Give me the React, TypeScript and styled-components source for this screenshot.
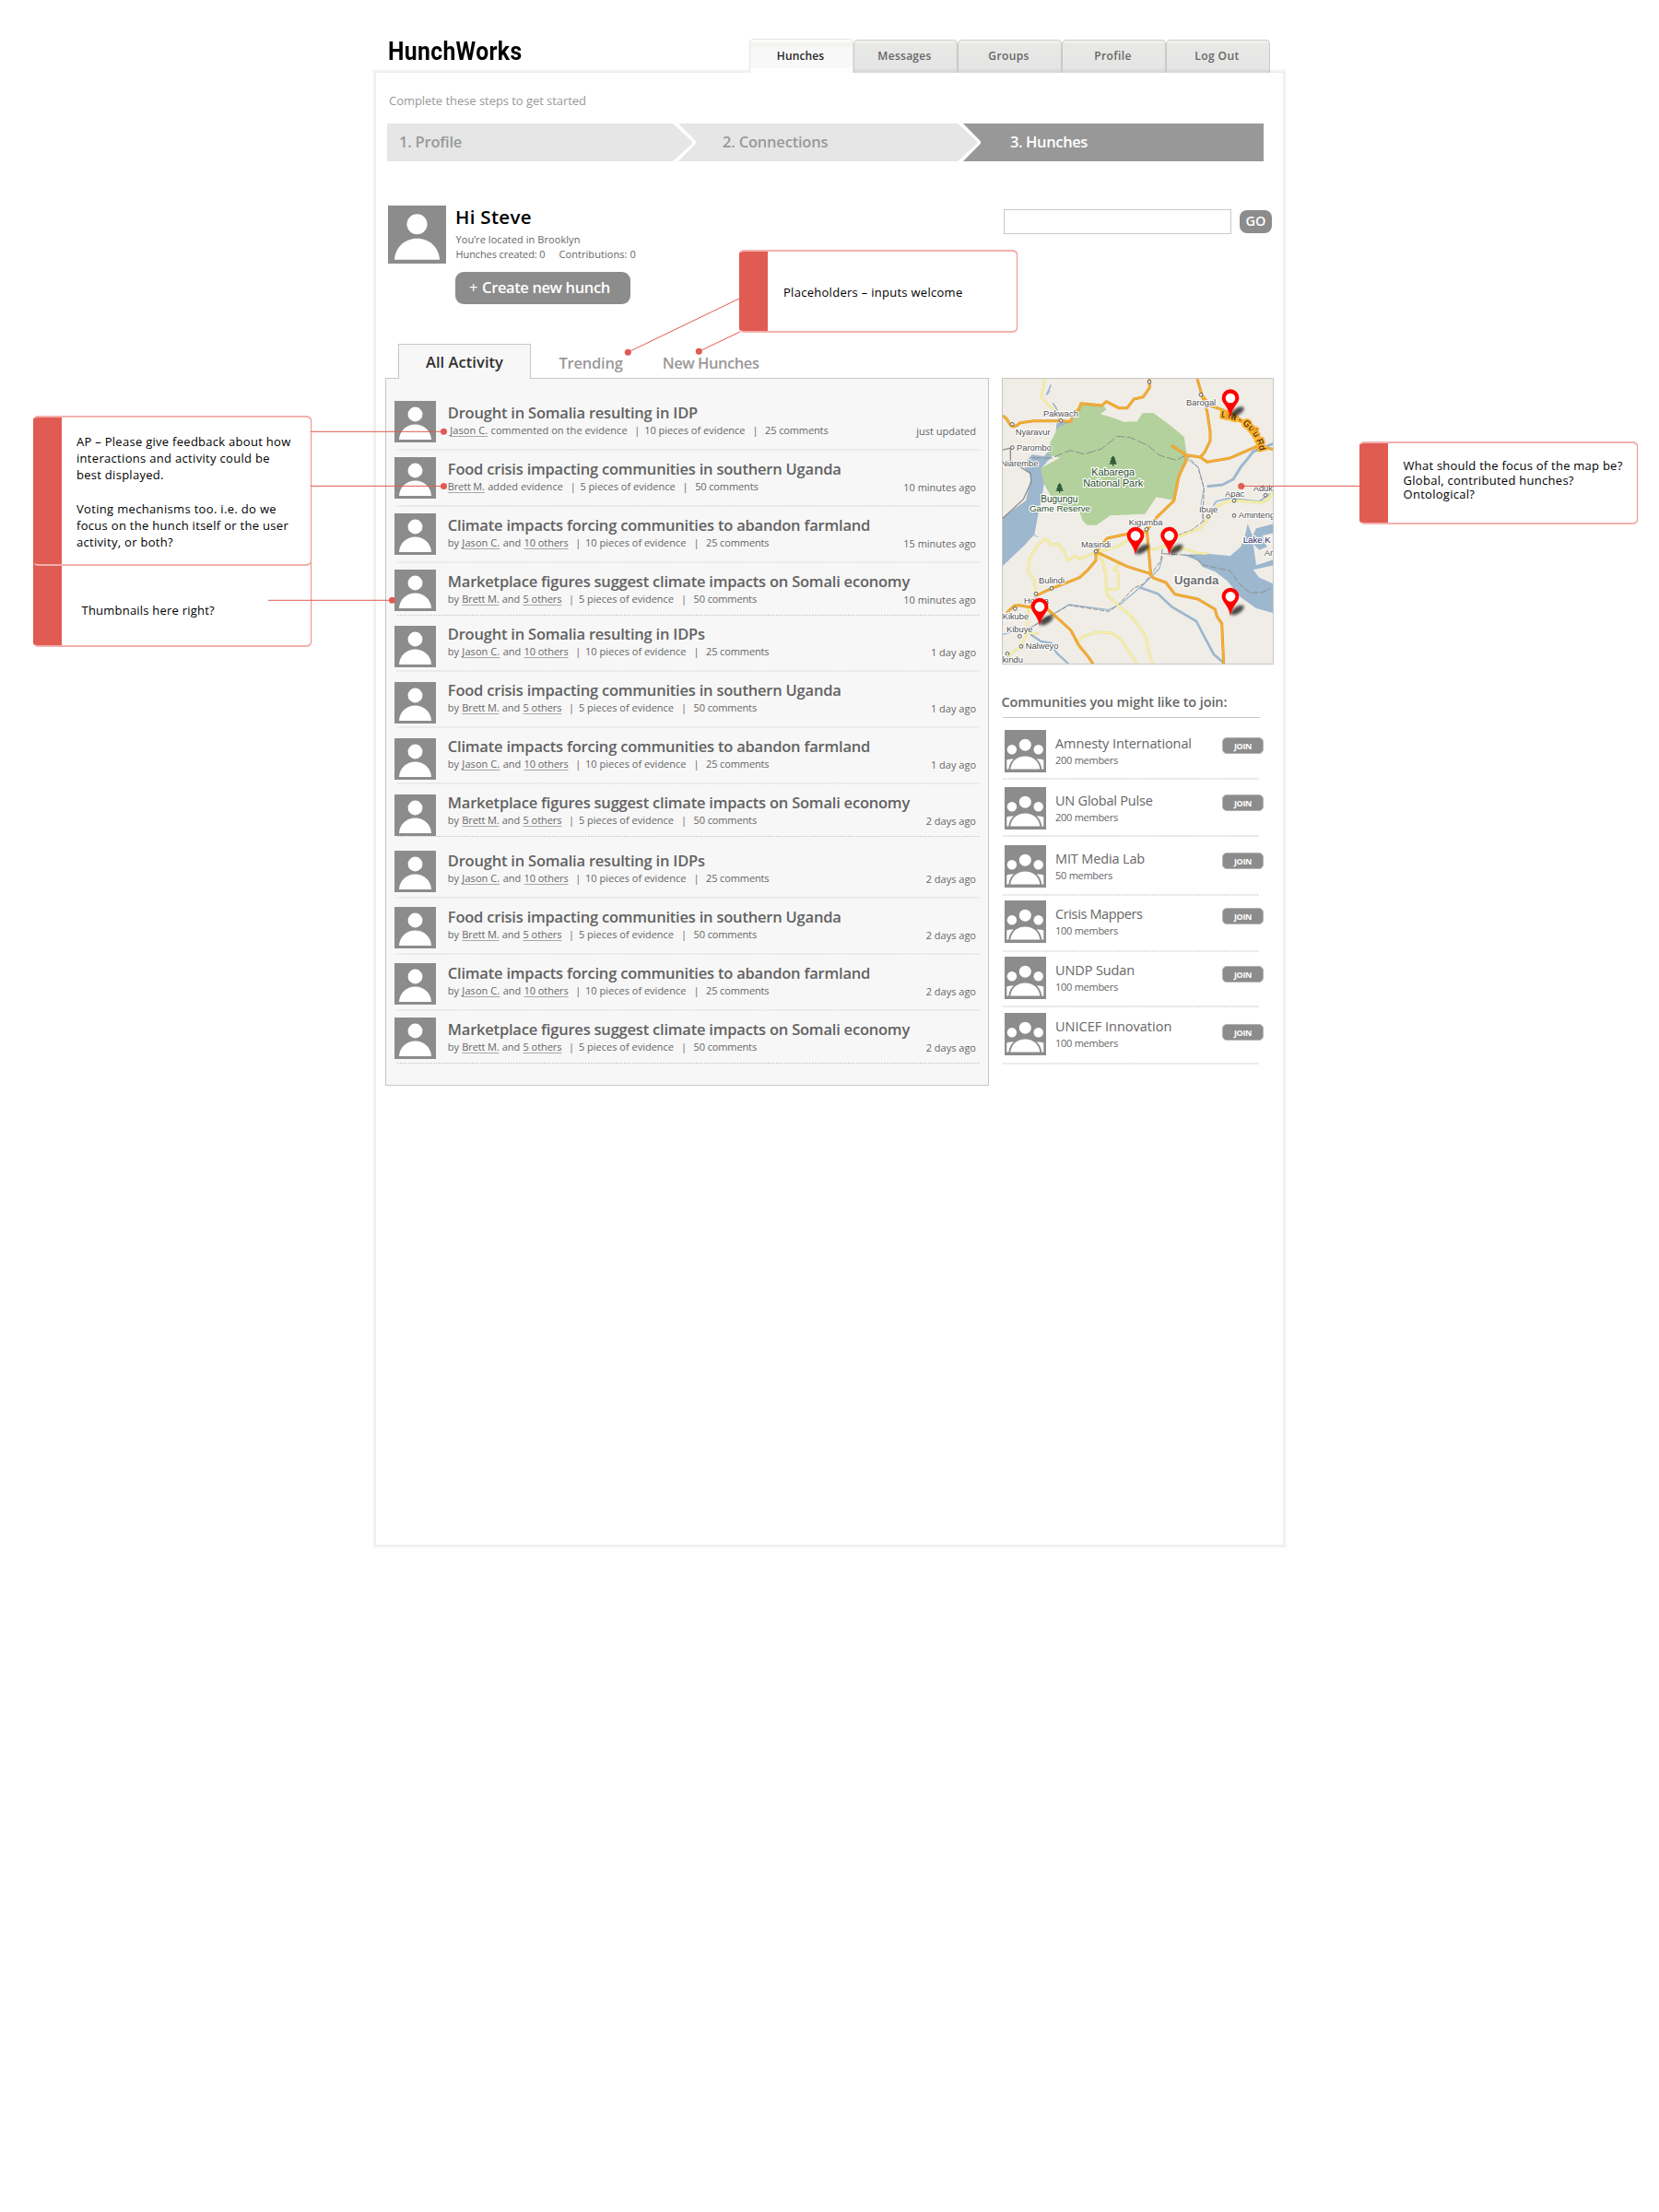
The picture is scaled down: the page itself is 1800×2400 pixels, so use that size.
import React from "react";
import styled, { createGlobalStyle } from "styled-components";

const sans = `"Open Sans", "Noto Sans", sans-serif`;
const grey = "#8c8c8c";
const red = "#e05b52";

const GlobalStyle = createGlobalStyle`
  body { margin: 0; background: #fff; font-family: ${sans}; }
  * { box-sizing: border-box; }
`;

/* ---------- page frame ---------- */

const Canvas = styled.div`
  position: relative;
  width: 1800px;
  height: 2400px;
  overflow: hidden;
`;

const Shell = styled.div`
  width: 984px;
  margin: 0 auto;
`;

const Header = styled.header`
  display: flex;
  justify-content: space-between;
  align-items: flex-end;
  height: 79px;
  padding: 0 14.5px 0 12.5px;
`;

const Logo = styled.h1`
  margin: 0 0 5px;
  font: 700 28px/36px Roboto, sans-serif;
  letter-spacing: 0.4px;
  color: #000;
  transform: scaleX(0.882);
  transform-origin: left;
`;

const Nav = styled.nav`
  position: relative;
  z-index: 1;
  display: flex;
`;

const NavTab = styled.a<{ $active?: boolean; $ls: number }>`
  width: 113px;
  height: ${(p) => (p.$active ? 37 : 36)}px;
  align-self: flex-end;
  border: solid ${(p) => (p.$active ? "#e6e6e6" : "#c9c9c9")};
  border-width: 1px 1px 0;
  border-radius: 5px 5px 0 0;
  background: ${(p) =>
    p.$active
      ? "linear-gradient(#fff 0, #f4f3f0 5px, #f8f8f8 11px, #f8f8f8 30px, #fefefe 31px)"
      : "linear-gradient(#f6f5f3 0, #e8e8e6 4px, #e5e5e5 31px, #d9d9d9 32px, #d9d9d9 100%)"};
  text-align: center;
  text-indent: -1px;
  font-weight: 600;
  font-size: 12px;
  line-height: ${(p) => (p.$active ? 35 : 34)}px;
  letter-spacing: ${(p) => p.$ls}px;
  color: ${(p) => (p.$active ? "#262626" : "#666")};
`;

const Panel = styled.main`
  height: 1597px;
  padding-top: 20px;
  background: #fff;
  box-shadow: 0 0 0 2px #eeeeee, 0 0 0 4px #f8f8f7;
`;

/* ---------- onboarding steps ---------- */

const Intro = styled.p`
  margin: 0 0 15px 14px;
  font-size: 13px;
  line-height: 20px;
  letter-spacing: -0.05px;
  color: #999;
`;

const Steps = styled.div`
  display: flex;
  width: 951px;
  height: 41px;
  margin-left: 12px;
`;

const Step = styled.div<{ $w: number; $pad: number; $ls: number; $current?: boolean }>`
  width: ${(p) => p.$w}px;
  padding-left: ${(p) => p.$pad}px;
  background: ${(p) => (p.$current ? "#989898" : "#e6e6e6")};
  color: ${(p) => (p.$current ? "#fff" : "#999")};
  font-weight: 600;
  font-size: 16.5px;
  line-height: 39px;
  letter-spacing: ${(p) => p.$ls}px;
`;

const Chevron = ({ next }: { next: string }) => (
  <svg width="25" height="41" viewBox="0 0 25 41">
    <rect width="25" height="41" fill={next} />
    <path d="M0 0H6L24.2 18.6Q26 20.5 24.2 22.4L6 41H0Z" fill="#fff" />
    <path d="M0 0L20.5 18.8Q22 20.5 20.5 22.2L0 41Z" fill="#e6e6e6" />
  </svg>
);

/* ---------- greeting and search ---------- */

const Greeting = styled.section`
  display: flex;
  align-items: flex-start;
  height: 107px;
  margin-top: 48px;
  padding: 0 12px 0 13px;
`;

const GreetingText = styled.div`
  padding-left: 10.5px;
`;

const Hello = styled.h2`
  margin: -1px 0 4px -0.5px;
  font-weight: 600;
  font-size: 20.5px;
  line-height: 26px;
  letter-spacing: 0.3px;
  color: #000;
`;

const Facts = styled.div`
  display: flex;
  gap: 15px;
  font-size: 11px;
  line-height: 16px;
  color: #666;
`;

const Fact = styled.span<{ $ls?: number }>`
  letter-spacing: ${(p) => p.$ls ?? 0}px;
`;

const CreateButton = styled.button`
  display: flex;
  gap: 5px;
  width: 190px;
  height: 35px;
  margin: 11px 0 0 -0.5px;
  padding: 0 0 2px 15px;
  align-items: center;
  border: 0;
  border-radius: 9px;
  background: ${grey};
  color: #fff;
  font: 600 16.5px ${sans};
  letter-spacing: -0.38px;
`;

const Plus = styled.span`
  font-weight: 400;
`;

const Search = styled.form`
  display: flex;
  align-items: center;
  gap: 9px;
  margin: 4px 0 0 auto;
`;

const SearchInput = styled.input`
  width: 247px;
  height: 27px;
  border: 1px solid #c8c8c8;
  background: #fff;
`;

const GoButton = styled.button`
  width: 35px;
  height: 25px;
  padding: 0 0 1px;
  border: 0;
  border-radius: 8px;
  background: ${grey};
  color: #fff;
  font: 600 14.5px/24px ${sans};
`;

/* ---------- two columns ---------- */

const Columns = styled.div`
  display: flex;
  align-items: flex-start;
  gap: 14px;
  margin: 43px 0 0 10px;
`;

const FeedColumn = styled.section`
  width: 655px;
`;

const FeedTabs = styled.div`
  display: flex;
  align-items: flex-end;
  height: 38px;
  padding-left: 14px;
`;

const FeedTab = styled.a<{ $active?: boolean; $ml?: number; $ls: number }>`
  flex: none;
  width: ${(p) => (p.$active ? "144px" : "auto")};
  height: 38px;
  margin-left: ${(p) => p.$ml ?? 0}px;
  position: relative;
  z-index: 1;
  border: ${(p) => (p.$active ? "1px solid #c6c6c6" : "0")};
  border-bottom: 0;
  background: ${(p) => (p.$active ? "#f7f7f7" : "transparent")};
  text-align: center;
  font-weight: 600;
  font-size: 16.5px;
  line-height: ${(p) => (p.$active ? 38 : 42)}px;
  letter-spacing: ${(p) => p.$ls}px;
  color: ${(p) => (p.$active ? "#303030" : "#999")};
`;

const Feed = styled.div`
  height: 768px;
  margin-top: -1px;
  padding: 24px 9px 0;
  border: 1px solid #c6c6c6;
  background: #f7f7f7;
`;

const FeedItem = styled.article<{ $h: number }>`
  height: ${(p) => p.$h}px;
`;

const FeedMain = styled.div<{ $h: number }>`
  display: flex;
  align-items: flex-start;
  height: ${(p) => p.$h}px;
`;

const FeedText = styled.div<{ $top: number }>`
  flex: 1;
  margin-top: ${(p) => p.$top}px;
  padding: 0 4px 0 12.8px;
`;

const FeedTitle = styled.h3`
  margin: 0;
  font-weight: 600;
  font-size: 16.5px;
  line-height: 20px;
  letter-spacing: -0.21px;
  color: #626262;
  white-space: nowrap;
`;

const MetaLine = styled.div<{ $indent: number }>`
  display: flex;
  margin-top: 1px;
  padding-left: ${(p) => p.$indent}px;
  font-size: 11px;
  line-height: 16px;
  color: #666;
  white-space: nowrap;
`;

const Who = styled.span`
  display: flex;
  gap: 3.3px;
`;

const Person = styled.a<{ $ls?: number }>`
  letter-spacing: ${(p) => p.$ls ?? 0}px;
  text-decoration: underline #a8a8a8 1px;
  text-underline-offset: 2px;
`;

const Bar = styled.span`
  margin: 0 4.8px 0 7.6px;
`;

const LastBar = styled(Bar)`
  margin: 0 7.5px 0 8px;
`;

const Comments = styled.span`
  letter-spacing: -0.12px;
`;

const When = styled.time`
  margin: 1px 0 0 auto;
`;

const FeedRule = styled.div<{ $dark?: boolean }>`
  height: ${(p) => (p.$dark ? 1 : 2)}px;
  margin-left: 3px;
  background: repeating-linear-gradient(
    90deg,
    ${(p) => (p.$dark ? "#c2c2c2 0 1px, #dcdcdc 1px 2px, #f7f7f7 2px 3px" : "#e2e2e2 0 1px, #f0f0f0 1px 3px")}
  );
`;

/* ---------- side column ---------- */

const Side = styled.aside`
  width: 295px;
  padding-top: 37px;
`;

const MapFrame = styled.div`
  width: 295px;
  height: 311px;
  border: 1px solid #c6c6c6;
  overflow: hidden;
  svg { display: block; }
`;

const SideTitle = styled.h2`
  width: 279px;
  height: 27px;
  margin: 31px 0 0 1px;
  border-bottom: 1px solid #c6c6c6;
  font-weight: 600;
  font-size: 14.5px;
  line-height: 20px;
  letter-spacing: -0.1px;
  text-indent: -1.5px;
  color: #666;
`;

const Communities = styled.div`
  width: 283px;
  padding: 13px 0 0 1px;
`;

const Community = styled.article<{ $h: number }>`
  height: ${(p) => p.$h}px;
`;

const CommunityMain = styled.div<{ $h: number }>`
  display: flex;
  align-items: flex-start;
  height: ${(p) => p.$h}px;
  padding-left: 2px;
`;

const CommunityText = styled.div`
  flex: 1;
  padding: 5px 0 0 10px;
  color: #666;
  white-space: nowrap;
`;

const CommunityName = styled.div<{ $ls: number }>`
  font-size: 14.5px;
  line-height: 20px;
  letter-spacing: ${(p) => p.$ls}px;
`;

const Members = styled.div`
  font-size: 11px;
  line-height: 16px;
  letter-spacing: -0.27px;
`;

const JoinButton = styled.button<{ $top: number }>`
  width: 45px;
  height: 18px;
  margin: ${(p) => p.$top}px -1px 0 0;
  padding: 0;
  border: 1px solid #b4b4b4;
  border-radius: 5px;
  background: ${grey};
  color: #fff;
  font: 700 9px/15px ${sans};
  letter-spacing: -0.3px;
`;

const CommunityRule = styled.div`
  width: 278px;
  height: 2px;
  background: repeating-linear-gradient(90deg, #dedede 0 1px, #f2f2f2 1px 3px);
`;

/* ---------- review notes laid over the page ---------- */

const Note = styled.div<{ $x: number; $y: number; $w: number; $h: number; $px: number; $pt: number; $lh: number }>`
  position: absolute;
  left: ${(p) => p.$x}px;
  top: ${(p) => p.$y}px;
  width: ${(p) => p.$w}px;
  height: ${(p) => p.$h}px;
  padding: ${(p) => p.$pt}px 0 0 ${(p) => p.$px}px;
  border: 2px solid #f2b1ad;
  border-width: 2px 1px;
  border-left-color: ${red};
  border-right-color: #ee918b;
  border-radius: 5px;
  background: linear-gradient(90deg, ${red} 0 30px, #fff 30px) padding-box, ${red} left / 31px 100% no-repeat border-box;
  font-size: 13px;
  line-height: ${(p) => p.$lh}px;
  color: #000;
  white-space: nowrap;
`;

const NoteLine = styled.div<{ $ls?: number }>`
  min-height: 1lh;
  letter-spacing: ${(p) => p.$ls ?? 0.28}px;
`;

const Wires = styled.svg`
  position: absolute;
  inset: 0;
  pointer-events: none;
`;

/* ---------- drawings ---------- */

const Avatar = ({ size = 45 }: { size?: number }) => (
  <svg width={size} height={size} viewBox="0 0 45 45" style={{ flex: "none" }}>
    <rect width="45" height="45" fill={grey} />
    <circle cx="22.5" cy="14.5" r="7.9" fill="#fff" />
    <path d="M5 42C5.4 32.5 13 25.5 22.5 25.5S39.6 32.5 40 42Z" fill="#fff" />
  </svg>
);

const GroupIcon = () => (
  <svg width="45" height="46" viewBox="0 0 45 46" style={{ flex: "none" }}>
    <rect width="45" height="46" fill={grey} />
    <g fill="#fff">
      <circle cx="22.3" cy="16.2" r="6.5" />
      <circle cx="7.9" cy="21.3" r="5.2" />
      <circle cx="36.7" cy="21.3" r="5.2" />
      <path d="M2.3 42.5V32.6Q5.5 31 9.8 31.6Q5 36 4.3 42.5Z" />
      <path d="M42.3 42.5V32.6Q39 31 34.8 31.6Q39.6 36 40.3 42.5Z" />
      <path d="M6.2 42.6C7.4 34 13.6 28.6 22.3 28.6S37.2 34 38.4 42.6Z" />
    </g>
  </svg>
);

const Pin = ({ x, y }: { x: number; y: number }) => (
  <g transform={`translate(${x} ${y})`}>
    <ellipse cx="22" cy="-17" rx="25" ry="11" transform="rotate(-32 22 -17)" fill="#000" opacity="0.7" filter="url(#soft)" />
    <path d="M0 2C-3 -18 -12 -30 -20 -42C-25 -49 -28 -55 -28 -62A28 28 0 0 1 28 -62C28 -55 25 -49 20 -42C12 -30 3 -18 0 2Z" fill="#f00" />
    <circle cx="0" cy="-61" r="16" fill="#fff" />
  </g>
);

const Tree = ({ x, y }: { x: number; y: number }) => (
  <g transform={`translate(${x} ${y})`}>
    <path d="M0 -16L9 -4H5L12 5H7L14 12H2V18H-2V12H-14L-7 5H-12L-5 -4H-9Z" fill="#2f5d3a" stroke="#d5e8c8" strokeWidth="2" paintOrder="stroke" />
  </g>
);

const towns: [number, number][] = [
  [502, 43], [670, 85], [214, 169], [56, 181], [56, 257], [880, 412], [778, 430], [694, 481], [778, 478], [493, 523],
  [328, 595], [184, 715], [133, 733], [65, 781], [80, 871], [85, 904], [40, 928],
];

const labels: [string, number, number][] = [
  ["Pakwach", 157, 156], ["Nyaravur", 66, 216], ["Parombo", 70, 267], ["Niarembe", 19, 318], ["Barogal", 622, 120],
  ["Aduk", 840, 399], ["Apac", 748, 418], ["Ibuje", 664, 469], ["Aminteng", 792, 487], ["Kigumba", 435, 510],
  ["Masindi", 280, 582], ["Bulindi", 142, 699], ["Hoima", 94, 765], ["Kikube", 24, 816], ["Kibuye", 37, 858],
  ["Nalweyo", 99, 912], ["kindu", 24, 957], ["Ar", 876, 609],
];

const majorRoads = [
  "M22 153Q36 158 44 174T62 188T82 176L125 170L214 170L246 172L255 145L272 133L280 113L348 120L362 107L402 128H430L452 99L482 92L503 62L502 33",
  "M658 33L675 92L690 138L700 205V235L682 272L668 288",
  "M577 252L622 281L668 288L690 304L762 292L850 254L905 262",
  "M672 85L700 120L740 134L800 166L850 205L872 250",
  "M622 281V300L598 350L582 430L523 487L494 525",
  "M494 525L507 672L517 682L556 696L585 734L660 750L716 783L722 806L738 830L744 960",
  "M328 596L365 552L420 540L494 530",
  "M328 596L430 644L507 668",
  "M328 596V625L302 655L275 680L232 697L184 715L135 738L118 770L170 783L210 818L247 852L272 900L305 940L318 960",
  "M118 777L80 770L62 772L40 792",
];

const minorRoads = [
  "M158 33V60L150 92L180 125L198 138L212 166",
  "M905 394L890 425L865 436L795 430L750 433L722 450L692 492L670 518L620 538L560 560",
  "M328 596L275 620L262 608L235 625L225 596L205 570L180 573L165 553L138 575L110 622L108 660L128 690L133 733",
  "M328 596L350 625L360 668L362 718L388 720L402 715L400 660L385 655L408 632",
  "M362 718L366 738L410 780L440 802L470 840L490 870L502 930L513 960",
  "M338 596L398 580L430 558",
  "M460 585L520 588L545 578L620 588L660 600L688 602",
  "M268 890L285 872L330 857L380 860L410 880L430 913L460 958",
  "M108 780L104 860L84 905L48 930L30 960",
  "M104 860L138 862",
];

const MapDrawing = () => (
  <svg width="293" height="309" viewBox="25 33 879 927" fontFamily='"Liberation Sans", Arial, sans-serif'>
    <defs>
      <filter id="soft" x="-50%" y="-50%" width="200%" height="200%"><feGaussianBlur stdDeviation="4" /></filter>
      <path id="gulu" d="M735 158Q790 164 822 194Q848 216 860 262" />
    </defs>
    <rect x="22" y="31" width="886" height="934" fill="#f0ede7" />

    <g fill="#9cb7ce">
      <path d="M200 178L245 170L235 215L200 255L185 285L150 325L160 370L152 420L140 475L128 540L95 575L22 645V485L100 430L118 350L90 315L120 280L160 285L195 245Z" />
      <path d="M610 606L690 602L765 610L800 580L815 538L822 505L838 545L850 520L905 505V540L878 548L890 590L905 600V640L840 655L860 680L905 700V795L850 780L800 745L755 690L715 660L675 645L660 625Z" />
    </g>
    <path d="M905 535L870 543L885 580L860 590L840 570L850 640L905 622Z" fill="#f0ede7" />

    <path d="M280 113L355 122L362 133L343 148L390 162L420 173L462 172L480 145L515 144L575 188L615 222L624 280L580 428L525 418L488 473L375 478L330 509H300L285 495L268 448L240 455L190 432L158 372L148 325L210 290L172 278L180 240L205 192L246 172Z" fill="#b3d19c" />

    <g fill="none" stroke="#9cb7ce" strokeLinejoin="round">
      <path d="M182 52L168 84L178 72M188 112L200 130L205 160" strokeWidth="5" />
      <path d="M690 383L740 378L775 360L800 320L818 298L840 270L905 244" strokeWidth="9" />
      <path d="M620 290L662 322L680 390L670 440L680 500" strokeWidth="3" />
      <path d="M694 470L720 432L760 422L860 432L905 400" strokeWidth="5" />
      <path d="M545 612L535 650L480 705L410 765L370 785L240 768L120 840L25 865" strokeWidth="4" />
      <path d="M470 712L530 733L575 775L655 822L680 870L712 930L744 958" strokeWidth="8" />
      <path d="M115 865L150 888L182 893L200 925L238 960" strokeWidth="7" />
      <path d="M118 538L140 548" strokeWidth="3" />
    </g>

    <g fill="none" stroke="#8d8d8d" strokeWidth="3">
      <path d="M120 290L180 292L245 266L290 278L345 262L398 220L440 224L498 250L535 282L590 298L622 281" strokeDasharray="30 7" />
      <path d="M622 281L660 320L680 388L676 498L640 525L600 540L545 580L540 625L485 700L450 715L400 770L370 790L240 770L118 842" strokeDasharray="16 5" />
      <path d="M545 602L610 606L640 608L680 640L765 658L795 700L830 730L870 728L895 715" strokeDasharray="22 6" />
      <path d="M50 257V300L115 340L118 368L92 425L22 490M22 265L56 257" strokeWidth="4" />
    </g>

    <g fill="none" strokeLinejoin="round" strokeLinecap="round">
      {minorRoads.map((d) => <path key={d} d={d} stroke="#e3dc93" strokeWidth="8" />)}
      {minorRoads.map((d) => <path key={d} d={d} stroke="#f8f1a8" strokeWidth="5" />)}
      {majorRoads.map((d) => <path key={d} d={d} stroke="#dc9a2c" strokeWidth="9" />)}
      {majorRoads.map((d) => <path key={d} d={d} stroke="#f5ad35" strokeWidth="6" />)}
    </g>

    {towns.map(([x, y]) => (
      <circle key={`${x}-${y}`} cx={x} cy={y} r="5.5" fill="#fff" stroke="#555" strokeWidth="3" />
    ))}

    <text fontSize="29" fill="#111" stroke="#fdb02c" strokeWidth="13" strokeLinejoin="round" paintOrder="stroke">
      <textPath href="#gulu">Lira - Gulu Rd</textPath>
    </text>

    <g fontSize="28" fill="#4d4d4d" stroke="#fff" strokeWidth="6" strokeLinejoin="round" paintOrder="stroke">
      {labels.map(([t, x, y]) => <text key={t} x={x} y={y}>{t}</text>)}
    </g>

    <g fill="#1f4d28" stroke="#fff" strokeWidth="7" strokeLinejoin="round" paintOrder="stroke" textAnchor="middle">
      <text x="384" y="347" fontSize="32.5">Kabarega</text>
      <text x="384" y="383" fontSize="32.5">National Park</text>
      <text x="209" y="434" fontSize="30">Bugungu</text>
      <text x="211" y="465" fontSize="29.5">Game Reserve</text>
    </g>
    <Tree x={384} y={299} />
    <Tree x={210} y={387} />
    <text x="807" y="568" fontSize="29" fill="#1c1c5e" stroke="#fff" strokeWidth="8" strokeLinejoin="round" paintOrder="stroke">Lake K</text>
    <text x="583" y="701" fontSize="39.5" fontWeight="700" fill="#6e6e6e" stroke="#fff" strokeWidth="7" strokeLinejoin="round" paintOrder="stroke">Uganda</text>

    <Pin x={766} y={157} />
    <Pin x={457} y={605} />
    <Pin x={567} y={605} />
    <Pin x={766} y={803} />
    <Pin x={145} y={836} />
  </svg>
);

/* ---------- data ---------- */

const navTabs: [string, number][] = [["Hunches", 0.13], ["Messages", 0.28], ["Groups", 0.37], ["Profile", 0.36], ["Log Out", 0.43]];

type Hunch = {
  title: string;
  person: "Jason C." | "Brett M.";
  action?: string;
  when: string;
  top: number;
  line: number;
  h: number;
  dark?: boolean;
};

const DROUGHT = "Drought in Somalia resulting in IDPs";
const FOOD = "Food crisis impacting communities in southern Uganda";
const CLIMATE = "Climate impacts forcing communities to abandon farmland";
const MARKET = "Marketplace figures suggest climate impacts on Somali economy";

const hunches: Hunch[] = [
  { title: "Drought in Somalia resulting in IDP", person: "Jason C.", action: "commented on the evidence", when: "just updated", top: 3, line: 52, h: 61 },
  { title: FOOD, person: "Brett M.", action: "added evidence", when: "10 minutes ago", top: 3, line: 52, h: 61 },
  { title: CLIMATE, person: "Jason C.", when: "15 minutes ago", top: 3, line: 52, h: 61 },
  { title: MARKET, person: "Brett M.", when: "10 minutes ago", top: 3, line: 49, h: 61, dark: true },
  { title: DROUGHT, person: "Jason C.", when: "1 day ago", top: -1, line: 48, h: 61 },
  { title: FOOD, person: "Brett M.", when: "1 day ago", top: -1, line: 48, h: 61 },
  { title: CLIMATE, person: "Jason C.", when: "1 day ago", top: -1, line: 48, h: 61 },
  { title: MARKET, person: "Brett M.", when: "2 days ago", top: -1, line: 45, h: 61, dark: true },
  { title: DROUGHT, person: "Jason C.", when: "2 days ago", top: 1, line: 50, h: 61 },
  { title: FOOD, person: "Brett M.", when: "2 days ago", top: 1, line: 50, h: 61 },
  { title: CLIMATE, person: "Jason C.", when: "2 days ago", top: 1, line: 50, h: 59 },
  { title: MARKET, person: "Brett M.", when: "2 days ago", top: 3, line: 49, h: 60, dark: true },
];

const communities = [
  { name: "Amnesty International", ls: -0.1, members: 200, join: 8, line: 52, h: 62 },
  { name: "UN Global Pulse", ls: -0.22, members: 200, join: 8, line: 52, h: 63 },
  { name: "MIT Media Lab", ls: -0.14, members: 50, join: 8, line: 53, h: 60 },
  { name: "Crisis Mappers", ls: -0.37, members: 100, join: 8, line: 54, h: 61 },
  { name: "UNDP Sudan", ls: -0.11, members: 100, join: 10, line: 53, h: 61 },
  { name: "UNICEF Innovation", ls: 0, members: 100, join: 12, line: 54, h: 60 },
];

const wires: [number, number, number, number][] = [
  [337, 468.3, 481.5, 468.3],
  [337, 527.4, 481.5, 527.4],
  [291, 651.3, 425.5, 651.3],
  [802, 324, 681.3, 382.2],
  [803, 360, 758.3, 381.3],
  [1475, 527.4, 1346.7, 527.4],
];

const HunchRow = ({ item }: { item: Hunch }) => {
  const jason = item.person === "Jason C.";
  return (
    <FeedItem $h={item.h}>
      <FeedMain $h={item.line}>
        <Avatar />
        <FeedText $top={item.top}>
          <FeedTitle>{item.title}</FeedTitle>
          <MetaLine $indent={item.action && jason ? 2.5 : 0}>
            <Who>
              {!item.action && <span>by</span>}
              <Person $ls={jason ? 0.08 : -0.15}>{item.person}</Person>
              {item.action ? <Fact $ls={0.07}>{item.action}</Fact> : <span>and</span>}
              {!item.action && <Person $ls={-0.06}>{jason ? "10 others" : "5 others"}</Person>}
            </Who>
            <Bar>|</Bar>
            <span>{jason ? 10 : 5} pieces of evidence</span>
            <LastBar>|</LastBar>
            <Comments>{jason ? 25 : 50} comments</Comments>
            <When>{item.when}</When>
          </MetaLine>
        </FeedText>
      </FeedMain>
      <FeedRule $dark={item.dark} />
    </FeedItem>
  );
};

export default function App() {
  return (
    <Canvas>
      <GlobalStyle />
      <Shell>
        <Header>
          <Logo>HunchWorks</Logo>
          <Nav>
            {navTabs.map(([label, ls], i) => (
              <NavTab key={label} $active={i === 0} $ls={ls}>{label}</NavTab>
            ))}
          </Nav>
        </Header>

        <Panel>
          <Intro>Complete these steps to get started</Intro>
          <Steps>
            <Step $w={310} $pad={13} $ls={-0.22}>1. Profile</Step>
            <Chevron next="#e6e6e6" />
            <Step $w={284} $pad={29} $ls={-0.2}>2. Connections</Step>
            <Chevron next="#989898" />
            <Step $w={307} $pad={32} $ls={-0.38} $current>3. Hunches</Step>
          </Steps>

          <Greeting>
            <Avatar size={63} />
            <GreetingText>
              <Hello>Hi Steve</Hello>
              <Facts><Fact $ls={0.06}>You’re located in Brooklyn</Fact></Facts>
              <Facts>
                <Fact $ls={-0.1}>Hunches created: 0</Fact>
                <Fact $ls={0.06}>Contributions: 0</Fact>
              </Facts>
              <CreateButton><Plus>+</Plus>Create new hunch</CreateButton>
            </GreetingText>
            <Search>
              <SearchInput />
              <GoButton type="button">GO</GoButton>
            </Search>
          </Greeting>

          <Columns>
            <FeedColumn>
              <FeedTabs>
                <FeedTab $active $ls={0.05}>All Activity</FeedTab>
                <FeedTab $ml={30.5} $ls={-0.22}>Trending</FeedTab>
                <FeedTab $ml={43} $ls={-0.45}>New Hunches</FeedTab>
              </FeedTabs>
              <Feed>
                {hunches.map((item, i) => <HunchRow key={i} item={item} />)}
              </Feed>
            </FeedColumn>

            <Side>
              <MapFrame><MapDrawing /></MapFrame>
              <SideTitle>Communities you might like to join:</SideTitle>
              <Communities>
                {communities.map((c) => (
                  <Community key={c.name} $h={c.h}>
                    <CommunityMain $h={c.line}>
                      <GroupIcon />
                      <CommunityText>
                        <CommunityName $ls={c.ls}>{c.name}</CommunityName>
                        <Members>{c.members} members</Members>
                      </CommunityText>
                      <JoinButton $top={c.join}>JOIN</JoinButton>
                    </CommunityMain>
                    <CommunityRule />
                  </Community>
                ))}
              </Communities>
            </Side>
          </Columns>
        </Panel>
      </Shell>

      <Note $x={36} $y={543} $w={302} $h={159} $px={51.5} $pt={108} $lh={18}>
        <NoteLine $ls={0.22}>Thumbnails here right?</NoteLine>
      </Note>
      <Note $x={36} $y={451} $w={302} $h={163} $px={46} $pt={17} $lh={18.2}>
        <NoteLine>AP – Please give feedback about how</NoteLine>
        <NoteLine $ls={0.31}>interactions and activity could be</NoteLine>
        <NoteLine>best displayed.</NoteLine>
        <NoteLine />
        <NoteLine $ls={0.33}>Voting mechanisms too. i.e. do we</NoteLine>
        <NoteLine $ls={0.3}>focus on the hunch itself or the user</NoteLine>
        <NoteLine $ls={0.3}>activity, or both?</NoteLine>
      </Note>
      <Note $x={802} $y={271} $w={302} $h={90} $px={47} $pt={35} $lh={18}>
        <NoteLine>Placeholders – inputs welcome</NoteLine>
      </Note>
      <Note $x={1475} $y={479} $w={302} $h={90} $px={46.5} $pt={17} $lh={15.7}>
        <NoteLine $ls={0.24}>What should the focus of the map be?</NoteLine>
        <NoteLine>Global, contributed hunches?</NoteLine>
        <NoteLine>Ontological?</NoteLine>
      </Note>

      <Wires width="1800" height="2400">
        {wires.map(([x1, y1, x2, y2]) => (
          <g key={`${x2}-${y2}`}>
            <line x1={x1} y1={y1} x2={x2} y2={y2} stroke={red} strokeWidth="1" />
            <circle cx={x2} cy={y2} r="3.5" fill={red} />
          </g>
        ))}
      </Wires>
    </Canvas>
  );
}
